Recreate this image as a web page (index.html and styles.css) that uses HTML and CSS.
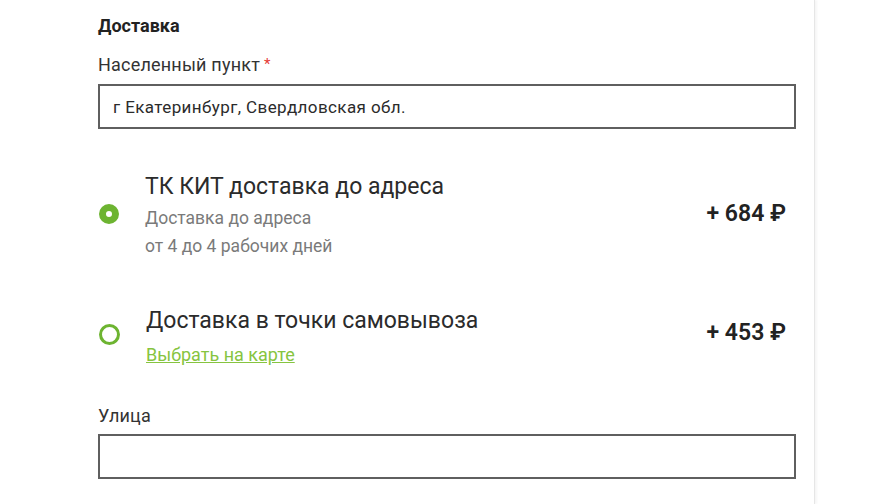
FILE: index.html
```html
<!DOCTYPE html>
<html lang="ru">
<head>
<meta charset="utf-8">
<link rel="stylesheet" href="styles.css">
</head>
<body>
<div class="page">
  <div class="panel">
    <div class="form">
      <h2 class="heading">Доставка</h2>
      <label class="label">Населенный пункт<span class="req">*</span></label>
      <div class="input"><span class="input-text">г Екатеринбург, Свердловская обл.</span></div>

      <div class="option option-first">
        <span class="radio radio-on"></span>
        <div class="option-body">
          <div class="option-title">ТК КИТ доставка до адреса</div>
          <div class="option-sub">Доставка до адреса</div>
          <div class="option-sub">от 4 до 4 рабочих дней</div>
        </div>
        <div class="price">+ 684 ₽</div>
      </div>

      <div class="option option-second">
        <span class="radio"></span>
        <div class="option-body">
          <div class="option-title">Доставка в точки самовывоза</div>
          <a class="map-link" href="#">Выбрать на карте</a>
        </div>
        <div class="price">+ 453 ₽</div>
      </div>

      <label class="label label-street">Улица</label>
      <div class="input input-street"></div>

      <label class="label label-next">Дом, квартира, подъезд, этаж, комментарий</label>
    </div>
  </div>
</div>
</body>
</html>
```

FILE: styles.css
```css
html, body {
  margin: 0;
  padding: 0;
  background: #ffffff;
  height: 504px;
  overflow: hidden;
}
body {
  font-family: Roboto, "Noto Sans", Arial, sans-serif;
  color: #2b2b2b;
}
.page {
  display: flex;
  height: 504px;
}
.panel {
  width: 814px;
  height: 504px;
  border-right: 1px solid #e6e6e6;
  box-shadow: 2px 0 2px rgba(0,0,0,0.04);
}
.form {
  width: 698px;
  padding-left: 98px;
  padding-top: 14px;
  display: flex;
  flex-direction: column;
}
.heading {
  margin: 0;
  font-size: 18px;
  font-weight: 700;
  line-height: 24px;
  color: #222;
}
.label {
  display: block;
  margin-top: 17px;
  font-size: 18px;
  line-height: 20px;
  letter-spacing: 0.2px;
  color: #333;
}
.req {
  color: #e53935;
  margin-left: 4px;
  font-size: 15px;
  line-height: 0;
  vertical-align: 2px;
}
.input {
  margin-top: 9px;
  height: 41px;
  border: 2px solid #5f5f5f;
  display: flex;
  align-items: center;
  padding-left: 13px;
  box-sizing: content-box;
}
.input-street {
  margin-top: 8px;
}
.input-text {
  font-size: 17px;
  letter-spacing: 0.4px;
  color: #2b2b2b;
}
.option {
  display: flex;
  align-items: flex-start;
}
.option-first {
  margin-top: 44px;
}
.option-second {
  margin-top: 47px;
}
.radio {
  width: 15px;
  height: 15px;
  border: 3px solid #6db431;
  border-radius: 50%;
  margin-left: 1px;
  flex-shrink: 0;
  background: #fff;
  box-sizing: content-box;
}
.radio-on {
  width: 6px;
  height: 6px;
  border: 7.5px solid #6db431;
}
.option-first .radio {
  margin-top: 31px;
}
.option-second .radio {
  margin-top: 17px;
}
.option-body {
  margin-left: 26px;
  flex: 1;
  display: flex;
  flex-direction: column;
}
.option-title {
  font-size: 23px;
  line-height: 28px;
  color: #2b2b2b;
}
.option-sub {
  font-size: 17.5px;
  line-height: 28px;
  color: #7a7a7a;
}
.option-first .option-title {
  margin-bottom: 3px;
}
.map-link {
  margin-top: 9px;
  font-size: 18px;
  line-height: 22px;
  color: #86c440;
  text-decoration: underline;
  align-self: flex-start;
}
.price {
  font-size: 23px;
  font-weight: 600;
  line-height: 28px;
  color: #222;
  margin-right: 10px;
}
.option-first .price {
  margin-top: 27px;
}
.option-second .price {
  margin-top: 12px;
}
.label-street {
  margin-top: 40px;
}
.label-next {
  margin-top: 22px;
}
```
